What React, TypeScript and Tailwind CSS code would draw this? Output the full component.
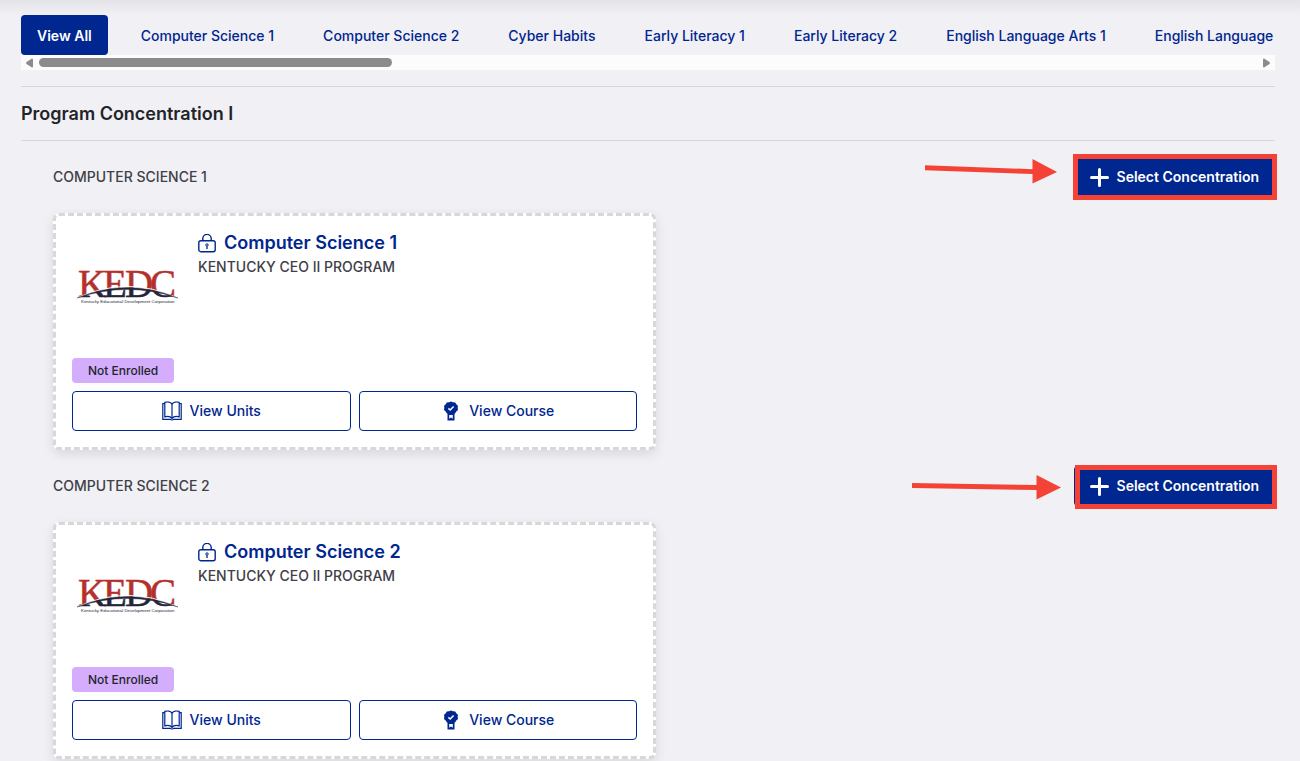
import { useId } from "react"

const TABS = [
  "Computer Science 1",
  "Computer Science 2",
  "Cyber Habits",
  "Early Literacy 1",
  "Early Literacy 2",
  "English Language Arts 1",
  "English Language",
]

const COURSES = [
  {
    title: "Computer Science 1",
    frame: "-left-[1px] -right-[2px] -top-[3px] -bottom-[3px]",
    arrow: "right-[218px] top-0",
    shaft: "M0 8.2 L0 13.2 L108 17 L108 12.2 Z",
    head: "M107.500 2 L132 15 L107.500 26.500 Z",
  },
  {
    title: "Computer Science 2",
    frame: "left-[1px] -right-[2px] -top-[1px] -bottom-[3px]",
    arrow: "right-[214px] top-[7px]",
    shaft: "M-17 10 L-17 15 L108 17 L108 12 Z",
    head: "M107.500 2 L132 14.500 L107.500 26.500 Z",
  },
]

function KedcLogo() {
  const id = useId()

  return (
    <svg viewBox="0 0 110 40" className="w-full overflow-visible" role="img" aria-label="KEDC">
      <defs>
        <radialGradient id={id} gradientUnits="userSpaceOnUse" cx="55" cy="150" r="129">
          <stop offset="1" stopColor="#25253a" />
          <stop offset="1" stopColor="#b3302c" />
        </radialGradient>
      </defs>
      <text
        x="6 31 53 78"
        y="30"
        fontSize="39"
        fontFamily="'Liberation Serif', serif"
        fill={`url(#${id})`}
        stroke={`url(#${id})`}
        strokeWidth="0.5"
      >
        KEDC
      </text>
      <path d="M5 31 Q55 8 106 31" fill="none" stroke="#fff" strokeWidth="1" />
      <path d="M5 31 Q55 10 106 31 Q55 14 5 31 Z" fill="#25253a" stroke="#25253a" strokeWidth="0.4" />
      <text x="9" y="36" fontSize="4.4" fontFamily="'Liberation Sans', sans-serif" fill="#25253a">
        Kentucky Educational Development Corporation
      </text>
    </svg>
  )
}

function LockIcon() {
  return (
    <svg viewBox="0 0 18 19" className="h-[19px] w-[18px] shrink-0" fill="none" stroke="#00268f" strokeWidth="1.400" aria-hidden="true">
      <rect x="0.8" y="6.800" width="16.400" height="10.900" rx="2" />
      <path d="M4.800 6.800 V4.600 a4.200 4.200 0 0 1 8.400 0 V6.800" />
      <circle cx="9" cy="11" r="1.200" strokeWidth="1" />
      <path d="M9 12.200 V15" strokeWidth="1.300" />
    </svg>
  )
}

function BookIcon() {
  return (
    <svg viewBox="0 0 20 20" className="h-5 w-5 shrink-0" fill="none" stroke="#00268f" strokeWidth="1.200" aria-hidden="true">
      <path d="M10 3 C8.500 1 5 0.700 2.800 1.400 V15.800 C5.500 15.200 8.500 15.400 10 17.300 C11.500 15.400 14.500 15.200 17.200 15.800 V1.400 C15 0.700 11.500 1 10 3 Z" />
      <path d="M10 3 V17.300" />
      <path d="M2.800 2.700 H0.800 V18.300 H8.300 C8.800 19.200 11.200 19.200 11.700 18.300 H19.200 V2.700 H17.200" />
    </svg>
  )
}

function BadgeIcon() {
  return (
    <svg viewBox="0 0 20 20" className="h-5 w-5 shrink-0" aria-hidden="true">
      <path
        fill="#00268f"
        d="M10 0.500 L12 1.300 L14.200 1.500 L15.300 3.300 L16.900 4.700 L16.700 6.900 L17 9 L15.300 10.400 L14.200 12.300 L13.500 12.700 V19.500 H6.500 V12.700 L5.800 12.300 L4.700 10.400 L3 9 L3.300 6.900 L3.100 4.700 L4.700 3.300 L5.800 1.500 L8 1.300 Z"
      />
      <path d="M7.400 7.400 L9.200 9 L12.600 5.500" fill="none" stroke="#fff" strokeWidth="1.500" />
      <path d="M8.200 14 H11.800 V17.800 L10 16.600 L8.200 17.800 Z" fill="#fff" />
    </svg>
  )
}

function Scrollbar() {
  return (
    <div className="flex h-[15px] items-center gap-[6px] bg-[#fcfcfc] px-[5px]" aria-hidden="true">
      <svg viewBox="0 0 7 10" className="h-[10px] w-[7px]">
        <path d="M6 0.500 Q7 0.500 7 1.500 V8.500 Q7 9.500 6 9.500 L0.500 6 Q-0.200 5 0.500 4 Z" fill="#8b8b8b" />
      </svg>
      <div className="flex-1">
        <div className="h-[9px] w-[29%] rounded-full bg-[#8b8b8b]" />
      </div>
      <svg viewBox="0 0 7 10" className="h-[10px] w-[7px]">
        <path d="M1 0.500 Q0 0.500 0 1.500 V8.500 Q0 9.500 1 9.500 L6.500 6 Q7.200 5 6.500 4 Z" fill="#8b8b8b" />
      </svg>
    </div>
  )
}

function CourseCard({ title }: { title: string }) {
  return (
    <article className="rounded-md border-[3px] border-dashed border-[#d5d9dc] bg-white p-4 shadow-[0_4px_12px_rgba(0,0,0,0.1)]">
      <div className="flex gap-4">
        <div className="flex h-[110px] w-[110px] shrink-0 items-center">
          <KedcLogo />
        </div>
        <div>
          <h3>
            <a href="#" className="flex items-center gap-2 text-[18px] leading-[22px] font-semibold text-[#00268f]">
              <LockIcon />
              {title}
            </a>
          </h3>
          <p className="mt-1 text-sm leading-[18px] font-medium text-[#3f4048]">KENTUCKY CEO II PROGRAM</p>
        </div>
      </div>
      <span className="mt-4 inline-flex h-[25px] items-center rounded bg-[#d4adfc] px-4 align-top text-xs font-medium text-[#212529]">
        Not Enrolled
      </span>
      <div className="mt-2 grid grid-cols-2 gap-2">
        <button className="flex h-10 items-center justify-center gap-2 rounded border border-[#00268f] text-sm font-medium text-[#00268f]">
          <BookIcon />
          View Units
        </button>
        <button className="flex h-10 items-center justify-center gap-2 rounded border border-[#00268f] text-sm font-medium text-[#00268f]">
          <BadgeIcon />
          View Course
        </button>
      </div>
    </article>
  )
}

export default function App() {
  return (
    <div className="min-h-screen bg-[#f1f0f5] font-['Inter',sans-serif] text-[#212529]">
      <div className="h-[15px] bg-gradient-to-b from-[#e4e4e8] to-[#f1f0f5]" />
      <main className="pr-[25px] pl-[21px]">
        <nav className="flex gap-[17px] overflow-hidden whitespace-nowrap">
          <button className="h-10 shrink-0 rounded bg-[#00268f] px-4 pt-[2px] text-sm font-semibold text-white">
            View All
          </button>
          {TABS.map((tab) => (
            <button key={tab} className="h-10 shrink-0 rounded px-4 pt-[2px] text-sm font-medium text-[#00268f]">
              {tab}
            </button>
          ))}
        </nav>
        <Scrollbar />

        <h2 className="mt-4 border-y border-[#d3d7db] py-3 text-[18px] leading-[29px] font-semibold">
          Program Concentration I
        </h2>

        <div className="flex flex-col gap-4 pt-4 pl-8">
          {COURSES.map((course) => (
            <section key={course.title} className="flex flex-col gap-4">
              <div className="relative flex items-center justify-between">
                <h3 className="text-sm font-medium text-[#3f4048] uppercase">{course.title}</h3>
                <div className="relative">
                  <button className="flex h-10 items-center gap-2 rounded bg-[#00268f] px-4 text-sm font-semibold text-white">
                    <svg viewBox="0 0 19 19" className="h-[19px] w-[19px]" stroke="#fff" strokeWidth="3" strokeLinecap="round" aria-hidden="true">
                      <path d="M9.500 1.500 V17.500 M1.500 9.500 H17.500" />
                    </svg>
                    Select Concentration
                  </button>
                  <div className={`pointer-events-none absolute border-[5px] border-[#f44336] ${course.frame}`} />
                </div>
                <svg viewBox="0 0 132 28" className={`absolute h-[28px] w-[132px] overflow-visible ${course.arrow}`} fill="#f44336" aria-hidden="true">
                  <path d={course.shaft} />
                  <path d={course.head} />
                </svg>
              </div>
              <div className="grid grid-cols-2 gap-4">
                <CourseCard title={course.title} />
              </div>
            </section>
          ))}
        </div>
      </main>
    </div>
  )
}
